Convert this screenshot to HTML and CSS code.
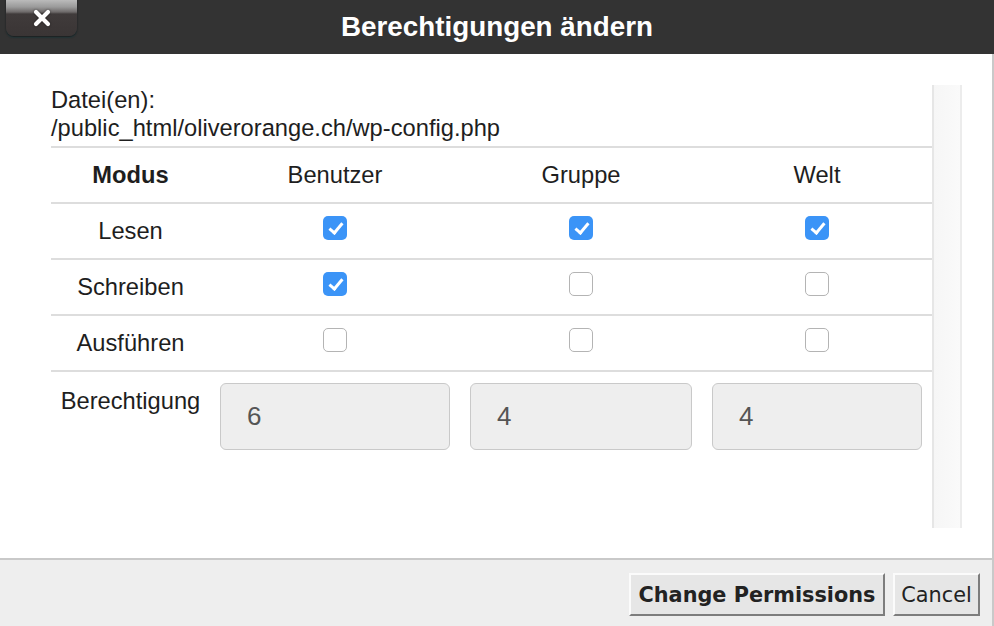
FILE: index.html
```html
<!DOCTYPE html>
<html lang="de">
<head>
<meta charset="utf-8">
<title>Berechtigungen ändern</title>
<link rel="stylesheet" href="styles.css">
</head>
<body>
<div class="dialog">
  <header class="titlebar">
    <button class="close" aria-label="Schließen">
      <svg width="18" height="18" viewBox="0 0 18 18"><path d="M3 3 L15 15 M15 3 L3 15" stroke="#fff" stroke-width="4.2" stroke-linecap="round"/></svg>
    </button>
    <h1 class="title">Berechtigungen ändern</h1>
  </header>
  <main class="body">
    <div class="content">
      <div class="file">Datei(en):<br>/public_html/oliverorange.ch/wp-config.php</div>
      <div class="grid">
        <div class="cell head mode">Modus</div>
        <div class="cell head">Benutzer</div>
        <div class="cell head">Gruppe</div>
        <div class="cell head">Welt</div>

        <div class="cell">Lesen</div>
        <div class="cell"><span class="cb on"></span></div>
        <div class="cell"><span class="cb on"></span></div>
        <div class="cell"><span class="cb on"></span></div>

        <div class="cell">Schreiben</div>
        <div class="cell"><span class="cb on"></span></div>
        <div class="cell"><span class="cb"></span></div>
        <div class="cell"><span class="cb"></span></div>

        <div class="cell">Ausführen</div>
        <div class="cell"><span class="cb"></span></div>
        <div class="cell"><span class="cb"></span></div>
        <div class="cell"><span class="cb"></span></div>

        <div class="cell perm label">Berechtigung</div>
        <div class="cell perm"><div class="num">6</div></div>
        <div class="cell perm"><div class="num">4</div></div>
        <div class="cell perm"><div class="num">4</div></div>
      </div>
    </div>
    <div class="track"></div>
  </main>
  <footer class="footer">
    <button class="btn primary">Change Permissions</button>
    <button class="btn">Cancel</button>
  </footer>
</div>
</body>
</html>
```
FILE: styles.css
```css
html, body {
  margin: 0;
  padding: 0;
  background: #fff;
}
.dialog {
  width: 994px;
  height: 626px;
  display: flex;
  flex-direction: column;
  font-family: "Liberation Sans", Arial, sans-serif;
  color: #222;
  overflow: hidden;
}
.titlebar {
  height: 54px;
  background: #333333;
  display: flex;
  align-items: center;
  justify-content: center;
  position: relative;
  flex: none;
}
.close {
  position: absolute;
  left: 6px;
  top: -2px;
  width: 71px;
  height: 38px;
  border: none;
  padding: 0;
  border-radius: 0 0 8px 8px;
  background: linear-gradient(to bottom, #c4c4c4 0px, #9a9a9a 9px, #6e6a6a 14px, #403b3b 16px, #3a3535 100%);
  box-shadow: 0 1px 2px #1a1a1a, 0 2px 1px rgba(20, 80, 90, 0.35);
  display: flex;
  align-items: center;
  justify-content: center;
  padding-top: 2px;
}
.close svg { display: block; filter: drop-shadow(0 0 1px rgba(0,0,0,0.6)); }
.title {
  margin: 0;
  color: #fff;
  font-size: 27.8px;
  font-weight: bold;
  line-height: 1;
}
.body {
  flex: 1;
  display: flex;
  padding: 31px 30px 30px 51px;
  border-right: 2px solid #c9c9c9;
  box-sizing: border-box;
  min-height: 0;
}
.content {
  width: 881px;
  flex: none;
}
.track {
  width: 30px;
  flex: none;
  box-sizing: border-box;
  background: linear-gradient(to right, #f6f6f6, #fafafa);
  border-left: 2px solid #e6e6e6;
  border-right: 2px solid #ececec;
}
.file {
  font-size: 23.7px;
  line-height: 28px;
  color: #1e1e1e;
  padding-top: 1px;
  padding-bottom: 4px;
}
.grid {
  display: grid;
  grid-template-columns: 159px 250px 242px 230px;
  border-top: 2px solid #dddddd;
}
.cell {
  height: 56px;
  box-sizing: border-box;
  border-bottom: 2px solid #dddddd;
  display: flex;
  align-items: center;
  justify-content: center;
  font-size: 23.7px;
  color: #1e1e1e;
}
.head.mode { font-weight: bold; }
.cb {
  width: 24px;
  height: 24px;
  box-sizing: border-box;
  border-radius: 5px;
  border: 1.5px solid #b4b4b4;
  background: #fff;
  margin-bottom: 6px;
  position: relative;
}
.cb.on {
  border: none;
  background: #3b94f7;
}
.cb.on::after {
  content: "";
  position: absolute;
  left: 8.5px;
  top: 3.5px;
  width: 5px;
  height: 11px;
  border: solid #fff;
  border-width: 0 3px 3px 0;
  transform: rotate(40deg);
}
.perm {
  height: auto;
  border-bottom: none;
  align-items: flex-start;
  padding: 11px 10px 0 10px;
}
.perm.label {
  padding: 15px 0 0 0;
  line-height: 28px;
}
.num {
  width: 100%;
  height: 67px;
  box-sizing: border-box;
  border: 1.5px solid #c9c9c9;
  border-radius: 6px;
  background: #eeeeee;
  font-size: 26px;
  color: #555;
  display: flex;
  align-items: center;
  padding-left: 26px;
}
.footer {
  height: 68px;
  flex: none;
  box-sizing: border-box;
  background: #eeeeee;
  border-top: 2px solid #c9c9c9;
  border-right: 2px solid #c9c9c9;
  display: flex;
  justify-content: flex-end;
  align-items: flex-start;
  gap: 8px;
  padding: 13px 12px 0 0;
}
.btn {
  height: 43px;
  box-sizing: border-box;
  font-family: "DejaVu Sans", Verdana, sans-serif;
  font-size: 20.8px;
  color: #222;
  background: #e6e6e6;
  border: 2px solid;
  border-color: #fbfbfb #7d7d7d #7d7d7d #fbfbfb;
  padding: 0 6px;
  margin: 0;
}
.btn.primary {
  font-weight: bold;
  width: 256px;
}
.btn:not(.primary) { width: 87px; }
```
